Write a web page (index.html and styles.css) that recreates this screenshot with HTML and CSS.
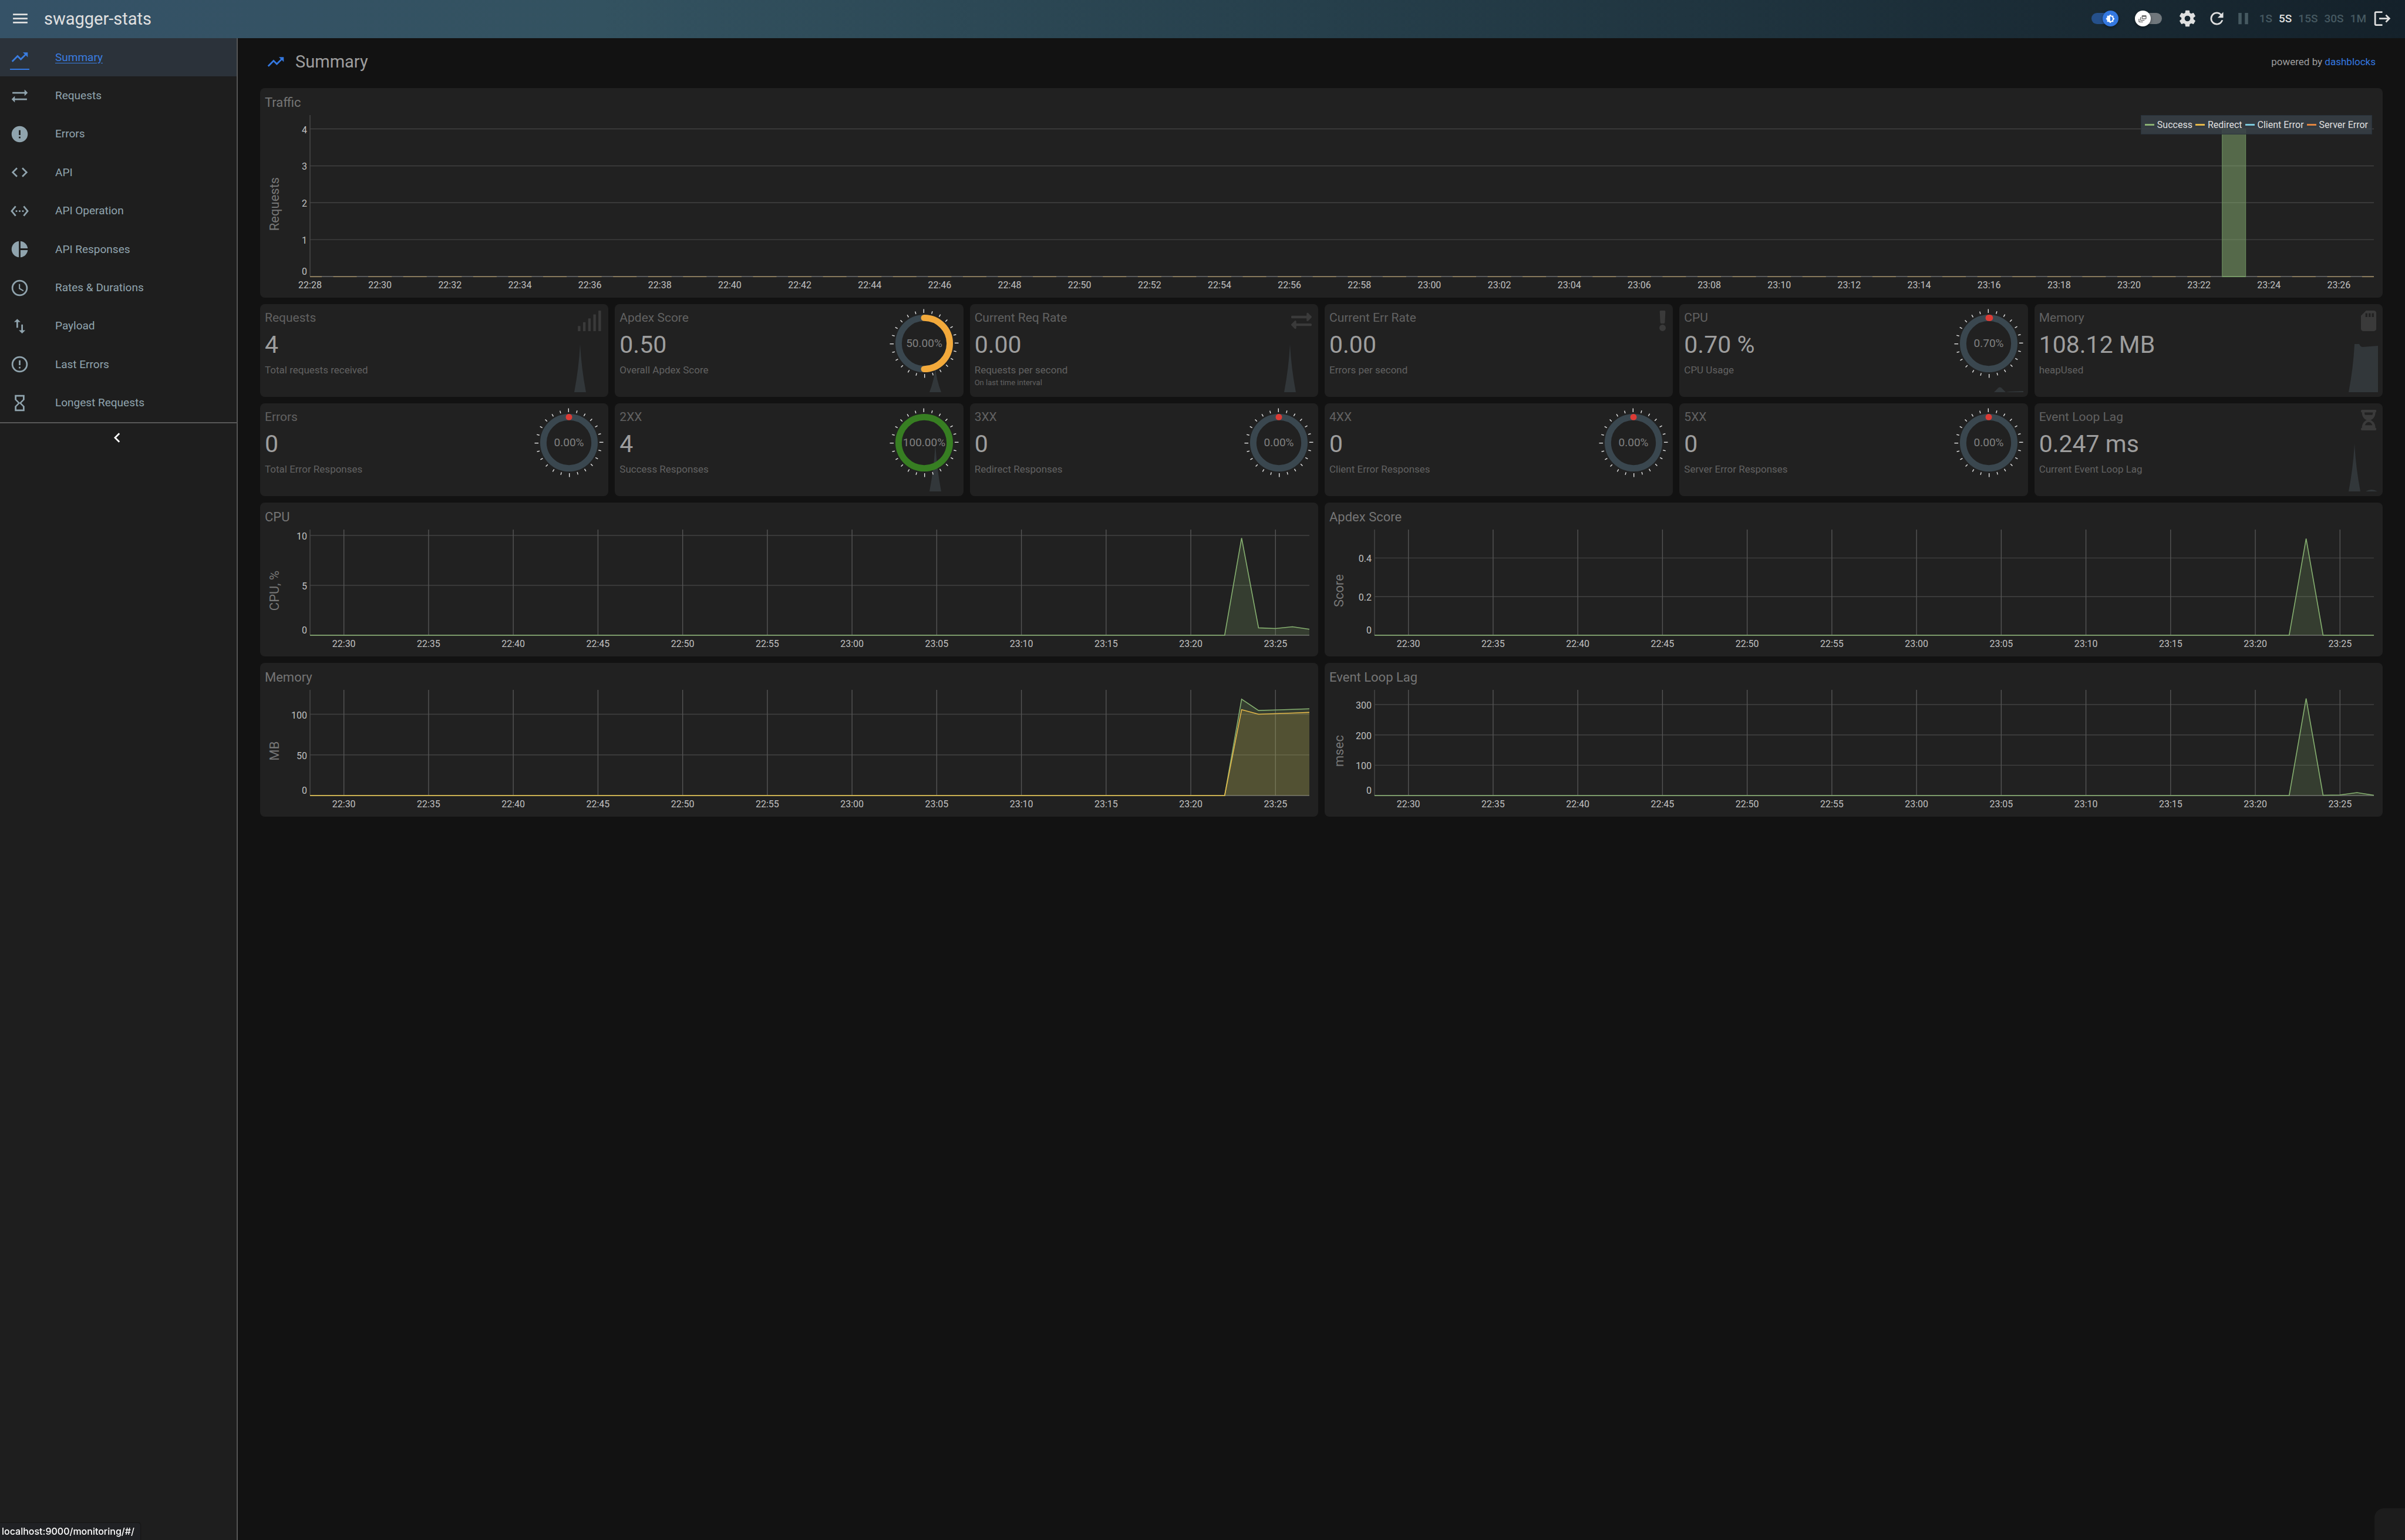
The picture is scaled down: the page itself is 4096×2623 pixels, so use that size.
FILE: index.html
```html
<!DOCTYPE html>
<html lang="en">
<head>
<meta charset="utf-8">
<meta name="viewport" content="width=device-width, initial-scale=1">
<title>swagger-stats</title>
<link rel="stylesheet" href="styles.css">
</head>
<body>
<header class="toolbar">
  <button class="icon-button" type="button" aria-label="Toggle menu"><svg class="icon" viewBox="0 0 24 24"><path d="M3,6H21V8H3V6M3,11H21V13H3V11M3,16H21V18H3V16Z"/></svg></button>
  <span class="brand">swagger-stats</span>
  <div class="toggles">
    <label class="switch">
      <input type="checkbox" checked aria-label="Dark theme">
      <span class="thumb"><svg viewBox="0 0 24 24"><path d="M12,18V6A6,6 0 0,1 18,12A6,6 0 0,1 12,18M20,15.31L23.31,12L20,8.69V4H15.31L12,.69L8.69,4H4V8.69L.69,12L4,15.31V20H8.69L12,23.31L15.31,20H20V15.31Z"/></svg></span>
    </label>
    <label class="switch">
      <input type="checkbox" aria-label="Stacked layout">
      <span class="thumb"><svg viewBox="0 0 24 24"><path d="M8 8H6v7c0 1.1.9 2 2 2h9v-2H8V8z"/><path d="M20 3h-8c-1.1 0-2 .9-2 2v6c0 1.1.9 2 2 2h8c1.1 0 2-.9 2-2V5c0-1.1-.9-2-2-2zm0 8h-8V7h8v4z"/><path d="M4 12H2v7c0 1.1.9 2 2 2h9v-2H4v-7z"/></svg></span>
    </label>
  </div>
  <div class="actions">
    <button class="icon-button" type="button" aria-label="Settings"><svg class="icon" viewBox="0 0 24 24"><path d="M12,15.5A3.5,3.5 0 0,1 8.5,12A3.5,3.5 0 0,1 12,8.5A3.5,3.5 0 0,1 15.5,12A3.5,3.5 0 0,1 12,15.5M19.43,12.97C19.47,12.65 19.5,12.33 19.5,12C19.5,11.67 19.47,11.34 19.43,11L21.54,9.37C21.73,9.22 21.78,8.95 21.66,8.73L19.66,5.27C19.54,5.05 19.27,4.96 19.05,5.05L16.56,6.05C16.04,5.66 15.5,5.32 14.87,5.07L14.5,2.42C14.46,2.18 14.25,2 14,2H10C9.75,2 9.54,2.18 9.5,2.42L9.13,5.07C8.5,5.32 7.96,5.66 7.44,6.05L4.95,5.05C4.73,4.96 4.46,5.05 4.34,5.27L2.34,8.73C2.21,8.95 2.27,9.22 2.46,9.37L4.57,11C4.53,11.34 4.5,11.67 4.5,12C4.5,12.33 4.53,12.65 4.57,12.97L2.46,14.63C2.27,14.78 2.21,15.05 2.34,15.27L4.34,18.73C4.46,18.95 4.73,19.03 4.95,18.95L7.44,17.94C7.96,18.34 8.5,18.68 9.13,18.93L9.5,21.58C9.54,21.82 9.75,22 10,22H14C14.25,22 14.46,21.82 14.5,21.58L14.87,18.93C15.5,18.67 16.04,18.34 16.56,17.94L19.05,18.95C19.27,19.03 19.54,18.95 19.66,18.73L21.66,15.27C21.78,15.05 21.73,14.78 21.54,14.63L19.43,12.97Z"/></svg></button>
    <button class="icon-button" type="button" aria-label="Refresh"><svg class="icon" viewBox="0 0 24 24"><path d="M17.65,6.35C16.2,4.9 14.21,4 12,4A8,8 0 0,0 4,12A8,8 0 0,0 12,20C15.73,20 18.84,17.45 19.73,14H17.65C16.83,16.33 14.61,18 12,18A6,6 0 0,1 6,12A6,6 0 0,1 12,6C13.66,6 15.14,6.69 16.22,7.78L13,11H20V4L17.65,6.35Z"/></svg></button>
  </div>
  <div class="intervals">
    <button class="icon-button muted" type="button" aria-label="Pause"><svg class="icon" viewBox="0 0 24 24"><path d="M14,19H18V5H14M6,19H10V5H6V19Z"/></svg></button>
    <button class="interval" type="button">1S</button>
    <button class="interval current" type="button">5S</button>
    <button class="interval" type="button">15S</button>
    <button class="interval" type="button">30S</button>
    <button class="interval" type="button">1M</button>
    <button class="icon-button" type="button" aria-label="Log out"><svg class="icon" viewBox="0 0 24 24"><path d="M17 7l-1.41 1.41L18.17 11H8v2h10.17l-2.58 2.58L17 17l5-5zM4 5h8V3H4c-1.1 0-2 .9-2 2v14c0 1.1.9 2 2 2h8v-2H4V5z"/></svg></button>
  </div>
</header>

<div class="layout">
  <aside class="sidebar">
    <nav class="menu">
      <a class="menu-item active" href="#/"><span class="menu-icon"><svg class="icon" viewBox="0 0 24 24"><path d="M16,6L18.29,8.29L13.41,13.17L9.41,9.17L2,16.59L3.41,18L9.41,12L13.41,16L19.71,9.71L22,12V6H16Z"/></svg></span><span>Summary</span></a>
      <a class="menu-item" href="#/requests"><span class="menu-icon"><svg class="icon" viewBox="0 0 24 24"><path d="M22 8l-4-4v3H3v2h15v3l4-4M2 16l4 4v-3h15v-2H6v-3l-4 4Z"/></svg></span><span>Requests</span></a>
      <a class="menu-item" href="#/errors"><span class="menu-icon"><svg class="icon" viewBox="0 0 24 24"><path d="M13,13H11V7H13M13,17H11V15H13M12,2A10,10 0 0,0 2,12A10,10 0 0,0 12,22A10,10 0 0,0 22,12A10,10 0 0,0 12,2Z"/></svg></span><span>Errors</span></a>
      <a class="menu-item" href="#/api"><span class="menu-icon"><svg class="icon" viewBox="0 0 24 24"><path d="M14.6,16.6L19.2,12L14.6,7.4L16,6L22,12L16,18L14.6,16.6M9.4,16.6L4.8,12L9.4,7.4L8,6L2,12L8,18L9.4,16.6Z"/></svg></span><span>API</span></a>
      <a class="menu-item" href="#/apiop"><span class="menu-icon"><svg class="icon" viewBox="0 0 24 24"><path d="M7.77 6.76L6.23 5.48.82 12l5.41 6.52 1.54-1.28L3.42 12l4.35-5.24zM7 13h2v-2H7v2zm10-2h-2v2h2v-2zm-6 2h2v-2h-2v2zm6.77-7.52l-1.54 1.28L20.58 12l-4.35 5.24 1.54 1.28L23.18 12l-5.41-6.52z"/></svg></span><span>API Operation</span></a>
      <a class="menu-item" href="#/apiresponses"><span class="menu-icon"><svg class="icon" viewBox="0 0 24 24"><path d="M11 2v20c-5.07-.5-9-4.79-9-10s3.93-9.5 9-10zm2.03 0v8.99H22c-.47-4.74-4.24-8.52-8.97-8.99zm0 11.01V22c4.74-.47 8.5-4.25 8.97-8.99h-8.97z"/></svg></span><span>API Responses</span></a>
      <a class="menu-item" href="#/rates"><span class="menu-icon"><svg class="icon" viewBox="0 0 24 24"><path d="M12,20A8,8 0 0,0 20,12A8,8 0 0,0 12,4A8,8 0 0,0 4,12A8,8 0 0,0 12,20M12,2A10,10 0 0,1 22,12A10,10 0 0,1 12,22C6.47,22 2,17.5 2,12A10,10 0 0,1 12,2M12.5,7V12.25L17,14.92L16.25,16.15L11,13V7H12.5Z"/></svg></span><span>Rates &amp; Durations</span></a>
      <a class="menu-item" href="#/payload"><span class="menu-icon"><svg class="icon" viewBox="0 0 24 24"><path d="M9 3L5 6.99h3V14h2V6.99h3L9 3zm7 14.01V10h-2v7.01h-3L15 21l4-3.99h-3z"/></svg></span><span>Payload</span></a>
      <a class="menu-item" href="#/lasterrors"><span class="menu-icon"><svg class="icon" viewBox="0 0 24 24"><path d="M11,15H13V17H11V15M11,7H13V13H11V7M12,2C6.47,2 2,6.5 2,12A10,10 0 0,0 12,22A10,10 0 0,0 22,12A10,10 0 0,0 12,2M12,20A8,8 0 0,1 4,12A8,8 0 0,1 12,4A8,8 0 0,1 20,12A8,8 0 0,1 12,20Z"/></svg></span><span>Last Errors</span></a>
      <a class="menu-item" href="#/longest"><span class="menu-icon"><svg class="icon" viewBox="0 0 24 24"><path d="M6 2v6h.01L6 8.01 10 12l-4 4 .01.01H6V22h12v-5.99h-.01L18 16l-4-4 4-3.99-.01-.01H18V2H6zm10 14.5V20H8v-3.5l4-4 4 4zm-4-5l-4-4V4h8v3.5l-4 4z"/></svg></span><span>Longest Requests</span></a>
    </nav>
    <button class="collapse" type="button" aria-label="Collapse menu"><svg class="icon" viewBox="0 0 24 24"><path d="M15.41,16.58L10.83,12L15.41,7.41L14,6L8,12L14,18L15.41,16.58Z"/></svg></button>
  </aside>

  <main class="content">
    <div class="heading">
      <svg class="icon heading-icon" viewBox="0 0 24 24"><path d="M16,6L18.29,8.29L13.41,13.17L9.41,9.17L2,16.59L3.41,18L9.41,12L13.41,16L19.71,9.71L22,12V6H16Z"/></svg>
      <h1 class="heading-title">Summary</h1>
      <p class="credit">powered by <a href="#dashblocks">dashblocks</a></p>
    </div>

    <section class="card chart-card">
      <h2 class="chart-title">Traffic</h2>
      <div class="chart chart-tall" data-chart="traffic"></div>
      <ul class="legend">
        <li><i class="swatch success"></i>Success</li>
        <li><i class="swatch redirect"></i>Redirect</li>
        <li><i class="swatch client"></i>Client Error</li>
        <li><i class="swatch server"></i>Server Error</li>
      </ul>
    </section>

    <div class="tiles">
      <section class="card tile">
        <div class="tile-text"><h2>Requests</h2><p class="value">4</p><p class="sub">Total requests received</p></div>
        <svg class="spark" viewBox="0 0 60 82"><path d="M10 82Q18 40 20 0Q22 40 30 82Z"/></svg>
        <svg class="tile-icon" viewBox="0 0 640 512"><path d="M40 384h48q8 0 8 8v112q0 8-8 8H40q-8 0-8-8V392q0-8 8-8zM168 288h48q8 0 8 8v208q0 8-8 8h-48q-8 0-8-8V296q0-8 8-8zM296 192h48q8 0 8 8v304q0 8-8 8h-48q-8 0-8-8V200q0-8 8-8zM424 96h48q8 0 8 8v400q0 8-8 8h-48q-8 0-8-8V104q0-8 8-8zM552 0h48q8 0 8 8v496q0 8-8 8h-48q-8 0-8-8V8q0-8 8-8z"/></svg>
      </section>
      <section class="card tile">
        <div class="tile-text"><h2>Apdex Score</h2><p class="value">0.50</p><p class="sub">Overall Apdex Score</p></div>
        <svg class="spark" viewBox="0 0 60 82"><path d="M10 82Q18 61 20 41Q22 61 30 82Z"/></svg>
        <div class="gauge" data-gauge="50"></div>
      </section>
      <section class="card tile">
        <div class="tile-text"><h2>Current Req Rate</h2><p class="value">0.00</p><p class="sub">Requests per second</p><p class="note">On last time interval</p></div>
        <svg class="spark" viewBox="0 0 60 82"><path d="M10 82Q18 40 20 0Q22 40 30 82Z"/></svg>
        <svg class="tile-icon" viewBox="0 0 512 512"><path d="M0 168v-16c0-13.255 10.745-24 24-24h360V80c0-21.367 25.899-32.042 40.971-16.971l80 80c9.372 9.373 9.372 24.569 0 33.941l-80 80C409.956 271.982 384 261.456 384 240v-48H24c-13.255 0-24-10.745-24-24zm488 152H128v-48c0-21.314-25.862-32.08-40.971-16.971l-80 80c-9.372 9.373-9.372 24.569 0 33.941l80 80C102.057 463.997 128 453.437 128 432v-48h360c13.255 0 24-10.745 24-24v-16c0-13.255-10.745-24-24-24z"/></svg>
      </section>
      <section class="card tile">
        <div class="tile-text"><h2>Current Err Rate</h2><p class="value">0.00</p><p class="sub">Errors per second</p></div>
        <svg class="tile-icon" viewBox="0 0 192 512"><path d="M176 432c0 44.112-35.888 80-80 80s-80-35.888-80-80 35.888-80 80-80 80 35.888 80 80zM25.26 25.199l13.6 272C39.499 309.972 50.041 320 62.83 320h66.34c12.789 0 23.331-10.028 23.97-22.801l13.6-272C167.425 11.49 156.496 0 142.77 0H49.23C35.504 0 24.575 11.49 25.26 25.199z"/></svg>
      </section>
      <section class="card tile">
        <div class="tile-text"><h2>CPU</h2><p class="value">0.70 %</p><p class="sub">CPU Usage</p></div>
        <svg class="spark" viewBox="0 0 60 82"><path d="M10 82L18 74Q20 73 22 74L30 82L36 81L60 80V82Z"/></svg>
        <div class="gauge" data-gauge="0.7"></div>
      </section>
      <section class="card tile">
        <div class="tile-text"><h2>Memory</h2><p class="value">108.12 MB</p><p class="sub">heapUsed</p></div>
        <svg class="spark" viewBox="0 0 60 82"><path d="M10 82Q18 40 20 0H28Q30 5 34 5L60 3V82Z"/></svg>
        <svg class="tile-icon" viewBox="0 0 384 512"><path d="M320 0H128L0 128v320c0 35.3 28.7 64 64 64h256c35.3 0 64-28.7 64-64V64c0-35.3-28.7-64-64-64zM160 160h-48V64h48v96zm80 0h-48V64h48v96zm80 0h-48V64h48v96z"/></svg>
      </section>
      <section class="card tile">
        <div class="tile-text"><h2>Errors</h2><p class="value">0</p><p class="sub">Total Error Responses</p></div>
        <div class="gauge" data-gauge="0"></div>
      </section>
      <section class="card tile">
        <div class="tile-text"><h2>2XX</h2><p class="value">4</p><p class="sub">Success Responses</p></div>
        <svg class="spark" viewBox="0 0 60 82"><path d="M10 82Q18 40 20 0Q22 40 30 82Z"/></svg>
        <div class="gauge" data-gauge="100"></div>
      </section>
      <section class="card tile">
        <div class="tile-text"><h2>3XX</h2><p class="value">0</p><p class="sub">Redirect Responses</p></div>
        <div class="gauge" data-gauge="0"></div>
      </section>
      <section class="card tile">
        <div class="tile-text"><h2>4XX</h2><p class="value">0</p><p class="sub">Client Error Responses</p></div>
        <div class="gauge" data-gauge="0"></div>
      </section>
      <section class="card tile">
        <div class="tile-text"><h2>5XX</h2><p class="value">0</p><p class="sub">Server Error Responses</p></div>
        <div class="gauge" data-gauge="0"></div>
      </section>
      <section class="card tile">
        <div class="tile-text"><h2>Event Loop Lag</h2><p class="value">0.247 ms</p><p class="sub">Current Event Loop Lag</p></div>
        <svg class="spark" viewBox="0 0 60 82"><path d="M10 82Q18 40 20 0Q22 40 30 82H39Q49 76 59 82Z"/></svg>
        <svg class="tile-icon" viewBox="0 0 384 512"><path d="M360 0H24C10.745 0 0 10.745 0 24v16c0 13.255 10.745 24 24 24 0 90.965 51.016 167.734 120.842 192C75.016 280.266 24 357.035 24 448c-13.255 0-24 10.745-24 24v16c0 13.255 10.745 24 24 24h336c13.255 0 24-10.745 24-24v-16c0-13.255-10.745-24-24-24 0-90.965-51.016-167.734-120.842-192C308.984 231.734 360 154.965 360 64c13.255 0 24-10.745 24-24V24c0-13.255-10.745-24-24-24zm-75.078 384H99.08c17.059-46.797 52.096-80 92.92-80 40.821 0 75.862 33.196 92.922 80zm.019-256H99.078C91.988 108.548 88 86.748 88 64h208c0 22.805-3.987 44.587-11.059 64z"/></svg>
      </section>
    </div>

    <div class="charts">
      <section class="card chart-card"><h2 class="chart-title">CPU</h2><div class="chart" data-chart="cpu"></div></section>
      <section class="card chart-card"><h2 class="chart-title">Apdex Score</h2><div class="chart" data-chart="apdex"></div></section>
      <section class="card chart-card"><h2 class="chart-title">Memory</h2><div class="chart" data-chart="memory"></div></section>
      <section class="card chart-card"><h2 class="chart-title">Event Loop Lag</h2><div class="chart" data-chart="lag"></div></section>
    </div>
  </main>
</div>
<div class="drawer-handle"></div>
<div class="status">localhost:9000/monitoring/#/</div>
<script src="charts.js"></script>
</body>
</html>
```
FILE: styles.css
```css
* { box-sizing: border-box; }

body {
  margin: 0;
  min-height: 100vh;
  display: flex;
  flex-direction: column;
  background: #121212;
  color: #9e9e9e;
  font-family: Roboto, "Liberation Sans", sans-serif;
}

h1, h2, p, ul { margin: 0; padding: 0; font-weight: 400; }
ul { list-style: none; }
button { margin: 0; padding: 0; border: 0; background: none; color: inherit; font: inherit; }
a { color: #3478e0; text-decoration: none; }

.icon { display: block; width: 33px; height: 33px; fill: currentColor; }

/* Toolbar */
.toolbar {
  display: flex;
  align-items: center;
  height: 65px;
  padding: 0 22px 2px 18px;
  color: #e0e0e0;
  background: linear-gradient(to left, #14212a, #263f4b 45%, #335260 75%, #355267 100%);
}
.brand { margin-left: 24px; font-size: 29px; line-height: 40px; }
.toggles { display: flex; gap: 28px; margin-left: auto; }
.actions { display: flex; gap: 17px; margin-left: 27px; }
.intervals { display: flex; align-items: center; gap: 11px; margin-left: 12px; }
.interval { font-size: 19px; line-height: 24px; font-weight: 500; color: #465961; }
.interval.current { color: #e0e0e0; }
.muted { color: #465961; }

.switch { position: relative; display: flex; align-items: center; width: 46px; height: 27px; }
.switch input {
  appearance: none;
  margin: 0;
  width: 46px;
  height: 19px;
  border-radius: 10px;
  background: #70777c;
}
.switch input:checked { background: #25508b; }
.thumb {
  position: absolute;
  top: 0;
  left: 0;
  display: grid;
  place-items: center;
  width: 27px;
  height: 27px;
  border-radius: 50%;
  background: #fff;
  box-shadow: 0 2px 5px rgba(0, 0, 0, .4);
}
.thumb svg { width: 16px; height: 16px; fill: #6b6b6b; }
.switch input:checked + .thumb { left: auto; right: 0; background: #3478e0; }
.switch input:checked + .thumb svg { fill: #fff; }

/* Sidebar */
.layout { flex: 1; display: flex; }
.sidebar {
  flex: none;
  width: 405px;
  background: #1e1e1e;
  border-right: 2px solid #555;
}
.menu {
  display: grid;
  grid-template-rows: repeat(10, 1fr);
  height: 656px;
  border-bottom: 2px solid #585858;
}
.menu-item {
  display: flex;
  align-items: center;
  gap: 44px;
  padding-left: 17px;
  font-size: 19px;
  line-height: 24px;
  color: #90a4ae;
}
.menu-item.active { background: #2b323a; color: #3a7de0; text-decoration: underline; text-underline-offset: 3px; }
.menu-icon { position: relative; }
.active .menu-icon::after {
  content: "";
  position: absolute;
  left: 0;
  top: 36px;
  width: 33px;
  height: 2px;
  background: #3478e0;
}
.collapse { display: grid; place-items: center; width: 100%; height: 49px; padding-right: 4px; color: #fff; }

/* Page content */
.content { flex: 1; min-width: 0; padding: 0 38px; }
.heading { display: flex; align-items: center; height: 85px; padding: 0 12px 5px 10px; }
.heading-icon { color: #3478e0; }
.heading-title { margin-left: 17px; font-size: 29px; line-height: 40px; }
.credit { margin-left: auto; font-size: 17px; line-height: 24px; }

.card { position: relative; border-radius: 8px; background: #212121; }

.tiles {
  display: grid;
  grid-template-columns: repeat(6, 1fr);
  gap: 11px;
  margin: 11px 0;
}
.tile { display: flex; justify-content: space-between; align-items: flex-start; min-height: 158px; padding-left: 8px; }
.tile h2 { font-size: 21px; line-height: 46px; color: #616161; }
.value { font-size: 41px; line-height: 47px; color: #9e9e9e; }
.sub { padding-top: 7px; font-size: 17px; line-height: 24px; color: #616161; }
.note { font-size: 13px; line-height: 20px; color: #616161; }
.tile-icon { height: 35px; margin: 11px 11px 0 0; fill: #3a3a3a; }
.spark { position: absolute; right: 8px; bottom: 8px; width: 60px; height: 82px; fill: #32373a; }
.gauge { position: relative; }
.gauge svg { display: block; width: 134px; height: 134px; }
.gauge text { font-size: 19px; fill: #808080; }

/* Charts */
.charts { display: grid; grid-template-columns: 1fr 1fr; gap: 11px; }
.chart-title { padding: 3px 0 0 8px; font-size: 22px; line-height: 43px; color: #757575; }
.chart { height: 216px; }
.chart-tall { height: 311px; }
.chart svg { display: block; width: 100%; height: 100%; overflow: visible; }
.chart text { font-size: 16px; fill: #c0c0c0; }
.chart .axis-name { font-size: 22px; fill: #777; }

.legend {
  position: absolute;
  top: 46px;
  right: 18px;
  display: flex;
  gap: 5px;
  height: 33px;
  padding: 0 6px;
  border: 1px solid #28313a;
  background: rgba(55, 63, 70, .85);
  font-size: 16px;
  line-height: 31px;
  color: #e0e0e0;
}
.legend li { display: flex; align-items: center; gap: 5px; }
.swatch { width: 16px; height: 3px; }
.success { background: #8ab173; }
.redirect { background: #e3b84a; }
.client { background: #7cc8da; }
.server { background: #e08540; }

.status {
  position: fixed;
  left: 0;
  bottom: 0;
  padding: 0 10px 0 3px;
  border-radius: 0 4px 0 0;
  background: #202124;
  color: #fff;
  font: 500 16px/29px Inter, "Liberation Sans", sans-serif;
  box-shadow: 0 0 2px #000;
}
.drawer-handle {
  position: fixed;
  right: 0;
  bottom: 0;
  width: 52px;
  height: 54px;
  border-radius: 16px 0 0 0;
  background: #1c1c1c;
}
```
FILE: charts.js
```js
// Time axis runs from 22:28 (minute 0) to 23:27 (minute 59).
var MINUTES = 59;
var PAD = { left: 85, right: 15, bottom: 36 };

var GREEN = '#86b070';
var YELLOW = '#e3b84a';

var CHARTS = {
  traffic: { name: 'Requests', max: 4.375, ticks: [0, 1, 2, 3, 4], first: 0, step: 2, bars: true },
  cpu: { name: 'CPU, %', max: 10.59, ticks: [0, 5, 10], first: 2, step: 5,
    series: [{ color: GREEN, fill: 0.2, tail: [0, 9.75, 0.74, 0.68, 0.85, 0.6] }] },
  apdex: { name: 'Score', max: 0.547, ticks: [0, 0.2, 0.4], first: 2, step: 5,
    series: [{ color: GREEN, fill: 0.2, tail: [0, 0.5, 0, 0, 0, 0] }] },
  memory: { name: 'MB', max: 130, ticks: [0, 50, 100], first: 2, step: 5,
    series: [{ color: GREEN, fill: 0.2, tail: [0, 118.6, 104.6, 105.3, 106, 106.7] },
      { color: YELLOW, fill: 0.17, tail: [0, 105.7, 100, 100.7, 101.5, 102.3] }] },
  lag: { name: 'msec', max: 348.5, ticks: [0, 100, 200, 300], first: 2, step: 5,
    series: [{ color: GREEN, fill: 0.2, tail: [0, 320, 1, 2, 9.7, 1] }] }
};

function clock(minute) {
  var total = 22 * 60 + 28 + minute;
  return Math.floor(total / 60) + ':' + ('0' + total % 60).slice(-2);
}

function line(x1, y1, x2, y2, color) {
  return '<line x1="' + x1 + '" y1="' + y1 + '" x2="' + x2 + '" y2="' + y2 + '" stroke="' + color + '" stroke-width="1.4"/>';
}

function drawChart(host) {
  var chart = CHARTS[host.dataset.chart];
  var width = host.clientWidth;
  var height = host.clientHeight;
  var x0 = PAD.left;
  var x1 = width - PAD.right;
  var y0 = height - PAD.bottom;
  function px(minute) { return x0 + (x1 - x0) * minute / MINUTES; }
  function py(value) { return y0 - y0 * value / chart.max; }

  var out = '';
  var labels = '';
  chart.ticks.forEach(function (value) {
    if (value > 0) { out += line(x0, py(value), x1, py(value), '#424242'); }
    labels += '<text text-anchor="end" x="' + (x0 - 5) + '" y="' + (value > 0 ? py(value) + 7 : y0 - 3) + '">' + value + '</text>';
  });
  for (var m = chart.first; m < MINUTES; m += chart.step) {
    if (!chart.bars) { out += line(px(m), 0, px(m), y0, '#555'); }
    labels += '<text text-anchor="middle" x="' + px(m) + '" y="' + (y0 + 20) + '">' + clock(m) + '</text>';
  }
  out += line(x0, 0, x0, y0, '#4a4a4a') + line(x0, y0, x1, y0, '#6e6e6e');

  if (chart.bars) {
    for (var b = 0; b <= MINUTES; b++) {
      out += line(Math.max(px(b) - 20, x0), y0 + 0.4, Math.min(px(b) + 20, x1), y0 + 0.4, b === 55 ? '#8ab173' : '#a08a5c');
    }
    out += '<rect x="' + (px(55) - 20) + '" y="' + py(4) + '" width="40" height="' + (y0 - py(4)) + '" fill="#8ab173" fill-opacity=".5" stroke="#6c9060"/>';
  } else {
    chart.series.forEach(function (s) {
      var points = [px(0) + ',' + y0];
      s.tail.forEach(function (v, i) { points.push(px(54 + i) + ',' + py(v)); });
      var path = points.join(' ');
      out += '<polygon points="' + path + ' ' + x1 + ',' + y0 + '" fill="' + s.color + '" fill-opacity="' + s.fill + '"/>' +
        '<polyline points="' + path + '" fill="none" stroke="' + s.color + '" stroke-width="1.6"/>';
    });
  }

  var mid = y0 / 2 + 14;
  labels += '<text class="axis-name" text-anchor="middle" transform="translate(32 ' + mid + ') rotate(-90)">' + chart.name + '</text>';
  host.innerHTML = '<svg viewBox="0 0 ' + width + ' ' + height + '">' + out + labels + '</svg>';
}

function drawGauge(host) {
  var percent = Number(host.dataset.gauge);
  var r = 43.6;
  var color = percent >= 100 ? '#377e22' : percent >= 50 ? '#f2a93b' : '#dc3b35';
  var out = '';
  for (var a = 0; a < 360; a += 15) {
    var tip = a % 90 === 0 ? 8.5 : 10.5;
    out += '<line x1="66.3" x2="66.3" y1="' + tip + '" y2="15.1" stroke="#e6e6e6" stroke-width="1.4" transform="rotate(' + a + ' 67 67)"/>';
  }
  out += '<circle cx="67" cy="67" r="' + r + '" fill="none" stroke="' + (percent >= 100 ? color : '#3a474f') + '" stroke-width="10.9"/>';
  if (percent < 100) {
    var t = Math.max(percent, 0.02) / 100 * 2 * Math.PI;
    out += '<path d="M67 ' + (67 - r) + 'A' + r + ' ' + r + ' 0 0 1 ' + (67 + r * Math.sin(t)) + ' ' + (67 - r * Math.cos(t)) +
      '" fill="none" stroke="' + color + '" stroke-width="10.9" stroke-linecap="round"/>';
  }
  host.innerHTML = '<svg viewBox="0 0 134 134">' + out +
    '<text text-anchor="middle" x="67" y="73">' + percent.toFixed(2) + '%</text></svg>';
}

function draw() {
  document.querySelectorAll('.chart').forEach(drawChart);
  document.querySelectorAll('.gauge').forEach(drawGauge);
}

draw();
window.addEventListener('resize', draw);
```
